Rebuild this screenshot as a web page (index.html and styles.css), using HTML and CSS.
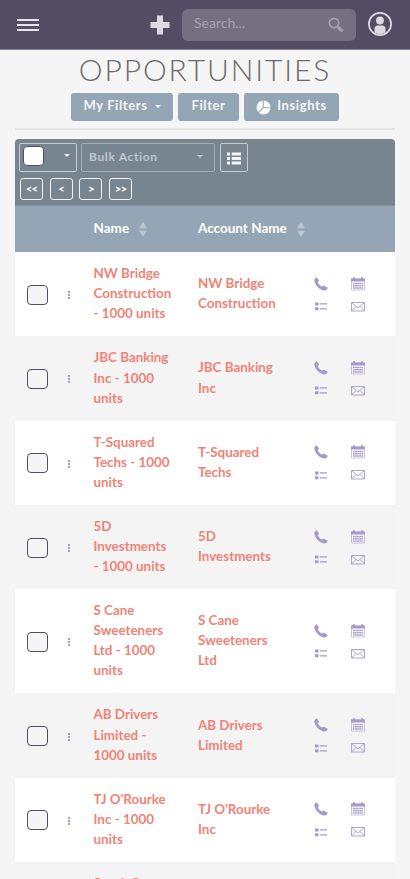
FILE: index.html
```
<!DOCTYPE html>
<html lang="en">
<head>
<meta charset="utf-8">
<title>Opportunities</title>
<link rel="stylesheet" href="styles.css">
</head>
<body>
<svg class="defs" aria-hidden="true">
  <symbol id="phone" viewBox="0 0 14 14"><path d="M1.200 1.200 2.800.2l2.300 3.500-1.300 1.600c.8 1.700 2.200 3.300 4.200 4.300L9.700 8.500l4 2.200c-.2 1.500-1.500 2.700-3.100 2.800C5.300 13 .4 7.300.3 3.200c0-.8.300-1.500.900-2z"/></symbol>
  <symbol id="calendar" viewBox="0 0 14 14"><path d="M.5 2h13v11H.5z" fill="#fff" fill-opacity=".6" stroke="currentColor" stroke-opacity=".6"/><path d="M0 1.500h2V.3h2v1.200h6V.3h2v1.200h2V4.500H0z"/><path d="M2 6.500h10M2 8.800h10M2 11.100h10" stroke="currentColor" stroke-width="1.500" stroke-dasharray="1.700 .4"/></symbol>
  <symbol id="list" viewBox="0 0 12 9"><path d="M0 .5h3.500v3H0zM0 5.300h3.500v3H0zM4.800 1.200H12v1.300H4.800zM4.800 6.200H12v1.300H4.800z"/></symbol>
  <symbol id="mail" viewBox="0 0 14 10"><path d="M.5.5h13v8.500H.5zM.7.700 7 6 13.300.7M.7 8.800 5 4.500M13.300 8.800 9 4.500" fill="none" stroke="currentColor" stroke-width=".9"/></symbol>
  <symbol id="sort" viewBox="0 0 8 15"><path d="M4 0 8 6.300H0zM0 8.700h8L4 15z"/></symbol>
</svg>
<header class="topbar">
  <div class="menu"><i></i><i></i><i></i></div>
  <svg class="plus" viewBox="0 0 20 20"><path d="M7 .5h6V7h6.500v6H13v6.500H7V13H.5V7H7z"/></svg>
  <div class="search"><span>Search...</span>
    <svg viewBox="0 0 16 16"><circle cx="6" cy="6" r="4.700" fill="none" stroke="currentColor" stroke-width="1.700"/><path d="m9.800 9.800 3.800 3.700" stroke="currentColor" stroke-width="3.200" stroke-linecap="round"/></svg>
  </div>
  <svg class="user" viewBox="0 0 24 24"><circle cx="12" cy="12" r="11.100" fill="none" stroke="currentColor" stroke-width="1.700"/><circle cx="12" cy="8.500" r="3.900"/><path d="M6.500 20.500V17q0-3.500 3.500-3.500h4q3.500 0 3.500 3.500v3.500Q12 24 6.500 20.500z"/></svg>
</header>
<main>
  <h1>OPPORTUNITIES</h1>
  <nav class="actions">
    <a class="btn filters">My Filters <b class="caret"></b></a>
    <a class="btn filter">Filter</a>
    <a class="btn insights"><svg viewBox="0 0 15 15"><circle cx="7.500" cy="7.500" r="7"/><path d="M7.200 0v7.800L2 13M7.200 7.800H15" fill="none" stroke="#94a6b5" stroke-width="1.100"/></svg>Insights</a>
  </nav>
  <hr>
  <section class="panel">
    <div class="toolbar">
      <div class="tools">
        <div class="select-all"><span class="box"></span><b class="caret"></b></div>
        <div class="bulk">Bulk Action<b class="caret"></b></div>
        <div class="columns"><svg viewBox="0 0 14 13"><path d="M0 .5h3v3H0zM0 5h3v3H0zM0 9.500h3v3H0zM4.700.5H14v3H4.700zM4.700 5H14v3H4.700zM4.700 9.500H14v3H4.700z"/></svg></div>
      </div>
      <div class="pager"><span>&lt;&lt;</span><span>&lt;</span><span>&gt;</span><span>&gt;&gt;</span></div>
    </div>
    <div class="row head"><div></div><div></div><div>Name<svg><use href="#sort"/></svg></div><div>Account Name<svg><use href="#sort"/></svg></div><div></div></div>
    <div id="rows"></div>
  </section>
</main>
<script src="rows.js"></script>
</body>
</html>
```
FILE: rows.js
```
const records = [
  [["NW Bridge", "Construction", "- 1000 units"], ["NW Bridge", "Construction"]],
  [["JBC Banking", "Inc - 1000", "units"], ["JBC Banking", "Inc"]],
  [["T-Squared", "Techs - 1000", "units"], ["T-Squared", "Techs"]],
  [["5D", "Investments", "- 1000 units"], ["5D", "Investments"]],
  [["S Cane", "Sweeteners", "Ltd - 1000", "units"], ["S Cane", "Sweeteners", "Ltd"]],
  [["AB Drivers", "Limited -", "1000 units"], ["AB Drivers", "Limited"]],
  [["TJ O'Rourke", "Inc - 1000", "units"], ["TJ O'Rourke", "Inc"]],
  [["South Sea"], []]
];
const icon = name => `<svg class="${name}"><use href="#${name}"/></svg>`;
document.getElementById("rows").innerHTML = records.map(([name, account]) => `
  <div class="row">
    <div class="check"><span></span></div>
    <div class="dots"><i></i><i></i><i></i></div>
    <div class="link">${name.join("<br>")}</div>
    <div class="link">${account.join("<br>")}</div>
    <div class="icons">${["phone", "calendar", "list", "mail"].map(icon).join("")}</div>
  </div>`).join("");
```
FILE: styles.css
```
* { box-sizing: border-box; }
html, body { height: 100%; overflow: hidden; }
body { margin: 0; background: #f5f5f5; font-family: Lato, sans-serif; font-size: 13px; }
svg { display: block; flex-shrink: 0; fill: currentColor; }
.defs { position: absolute; width: 0; height: 0; }

.topbar { height: 50px; display: flex; align-items: center; background: #534d64; border-bottom: 1px solid #87828f; padding: 0 18px 0 17px; color: #dddbe1; }
.menu { width: 22px; display: flex; flex-direction: column; gap: 3px; }
.menu i { height: 2px; background: #e6e5e9; }
.plus { width: 20px; height: 20px; margin-left: 111px; }
.search { width: 174px; height: 32px; margin-left: 12px; padding: 0 12px; display: flex; align-items: center; justify-content: space-between; border-radius: 6px; background: #756f82; color: #a5a1ae; font-size: 14px; }
.search span { padding-bottom: 4px; }
.search svg { width: 16px; height: 16px; }
.user { width: 24px; height: 24px; margin-left: 12px; margin-top: -1px; }

main { height: 829px; padding: 0 15px; overflow: hidden; }
h1 { margin: 0; height: 43px; padding-top: 1px; line-height: 36px; text-align: center; font-size: 30px; font-weight: 300; letter-spacing: 1.900px; color: #6a6a6a; white-space: nowrap; }
.actions { display: flex; justify-content: center; gap: 5px; }
.btn { height: 28px; display: flex; align-items: center; justify-content: center; padding-bottom: 4px; border-radius: 3px; background: #94a6b5; color: #f5f5f5; font-weight: 700; letter-spacing: .6px; }
.filters { width: 102px; }
.filter { width: 61px; }
.insights { width: 95px; }
.btn svg { width: 15px; height: 15px; margin: 4px 6px 0 0; color: #fff; }
.caret { width: 0; height: 0; border: 3px solid transparent; border-top-color: currentColor; border-bottom: 0; }
.filters .caret { margin-left: 7px; margin-top: 3px; }
hr { margin: 7px 0 9px; border: 0; height: 2px; background: #e5e5e5; }

.toolbar { height: 67px; padding: 4px 4px; background: #778590; border-radius: 4px 4px 0 0; border-bottom: 1px solid #84939e; }
.tools { display: flex; gap: 4px; height: 29px; color: #f5f5f5; }
.tools > div { border: 1px solid #c6cdd1; border-radius: 2px; display: flex; align-items: center; }
.tools .select-all { width: 58px; padding: 0 6px 4px 3px; justify-content: space-between; }
.box { width: 21px; height: 20px; background: #fff; border: 1px solid #534d64; border-radius: 4px; }
.tools .bulk { width: 134px; padding: 0 11px 3px 7px; justify-content: space-between; font-size: 12px; font-weight: 700; letter-spacing: .65px; color: #bfc7cc; border-color: #a0abb3; }
.tools .caret { border-width: 3.500px; border-bottom: 0; }
.tools .columns { width: 28px; margin-left: 1px; justify-content: center; }
.columns svg { width: 14px; height: 13px; margin-top: 1px; }
.pager { display: flex; gap: 6.700px; margin: 6px 0 0 1px; }
.pager span { width: 23px; height: 22px; border: 1px solid #f0f2f3; border-radius: 3px; color: #fff; font-weight: 700; font-size: 11.500px; line-height: 19px; text-align: center; letter-spacing: -.8px; }

.row { display: grid; grid-template-columns: 42.500px 24px 104.500px 104px 105px; align-items: center; padding: 11px 0; min-height: 84.300px; background: #fff; }
.row:nth-child(even) { background: #f4f4f4; }
.row:last-child { align-items: start; }
.row:last-child > :not(.link) { margin-top: 30px; }
.row.head { height: 46px; min-height: 0; padding: 0 0 1px; background: #94a6b5; color: #fff; font-size: 13.500px; font-weight: 700; border-bottom: 1px solid #94a6b5; }
.head div { display: flex; align-items: center; padding-left: 12px; white-space: nowrap; }
.head svg { width: 8px; height: 15px; margin: 2px 0 0 10px; color: #bdc7cf; }
.check { padding: 1px 0 0 11.500px; }
.check span { display: block; width: 21px; height: 20px; border: 1px solid #534d64; border-radius: 4px; background: #f5f5f5; }
.dots { display: grid; justify-content: center; gap: 1px; margin: 2px 2px 0 0; }
.dots i { width: 2px; height: 2px; background: #a89bc9; }
.link { padding: 0 0 1.800px 12px; font-size: 13.400px; font-weight: 700; line-height: 20.100px; color: #f08377; white-space: nowrap; }
.icons { display: grid; grid-template-columns: 37px 37px; grid-template-rows: 23px 23px; place-items: center; padding: 2px 0 0 12px; color: #a79acb; }
.phone, .calendar { width: 14px; height: 14px; }
.list { width: 12px; height: 9px; }
.mail { width: 14px; height: 10px; }
```
